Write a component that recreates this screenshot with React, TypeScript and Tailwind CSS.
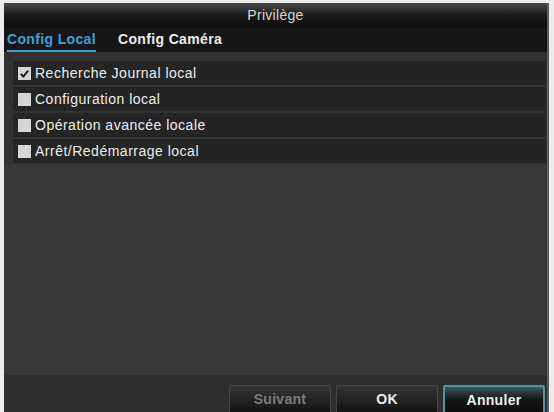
import React from "react";

const rows = [
  { label: "Recherche Journal local", checked: true },
  { label: "Configuration local", checked: false },
  { label: "Opération avancée locale", checked: false },
  { label: "Arrêt/Redémarrage local", checked: false },
];

function CheckBox({ checked }: { checked: boolean }) {
  return (
    <div className="w-[13px] h-[13px] bg-[#d6d6d6] flex items-center justify-center shrink-0">
      {checked && (
        <svg viewBox="0 0 12 12" className="w-[11px] h-[11px]">
          <path d="M2 6.5 L4.8 9.2 L10 2.8" fill="none" stroke="#222" strokeWidth="2.2" />
        </svg>
      )}
    </div>
  );
}

function Button({ label, tone }: { label: string; tone: "disabled" | "normal" | "active" }) {
  const base = "w-[102px] h-[30px] flex items-start justify-center pt-[3px] text-[14px] font-bold rounded-[2px] tracking-[0.3px]";
  if (tone === "active") {
    return (
      <div className={`${base} border-2 border-[#4b97a3] bg-gradient-to-b from-[#3d5a60] via-[#141414] to-[#0c0c0c] text-[#f0f0f0]`}>
        {label}
      </div>
    );
  }
  return (
    <div className={`${base} border border-[#474747] bg-gradient-to-b from-[#353535] to-[#121212] ${tone === "disabled" ? "text-[#7c7c7c]" : "text-[#eeeeee]"}`}>
      {label}
    </div>
  );
}

export default function App() {
  return (
    <div className="w-[554px] h-[412px] bg-[#ececec] pt-[3px] pl-[4px] pr-[5px] overflow-hidden font-['Liberation_Sans',Arial,sans-serif]">
      <div className="h-[420px] flex flex-col bg-[#383838] border-r-2 border-[#5a5a5a]">
        <div className="h-[25px] bg-gradient-to-b from-[#4a4a4a] via-[#1a1a1a] to-[#0d0d0d] flex items-center justify-center text-[14px] text-[#d8d8d8] tracking-[0.3px]">
          Privilège
        </div>
        <div className="h-[24px] bg-[#161616] flex items-end gap-[22px] pl-[3px]">
          <div className="text-[14px] font-bold text-[#3f9fda] border-b-2 border-[#3f9fda] pb-[2px] leading-[17px] tracking-[0.35px]">
            Config Local
          </div>
          <div className="text-[14px] font-bold text-[#ececec] pb-[4px] leading-[17px] tracking-[0.35px]">Config Caméra</div>
        </div>
        <div className="bg-[#323232] pt-[9px] pl-[9px] pr-[1px] pb-[1px] flex flex-col gap-[2px]">
          {rows.map((r) => (
            <div key={r.label} className="h-[24px] bg-[#252525] flex items-center gap-[4px] pl-[5px]">
              <CheckBox checked={r.checked} />
              <span className="text-[14px] text-[#ededed] tracking-[0.5px]">{r.label}</span>
            </div>
          ))}
        </div>
        <div className="h-[211px] bg-[#383838]" />
        <div className="flex-1 bg-[#2e2e2e] flex justify-end gap-[5px] pt-[10px] pr-[2px]">
          <Button label="Suivant" tone="disabled" />
          <Button label="OK" tone="normal" />
          <Button label="Annuler" tone="active" />
        </div>
      </div>
    </div>
  );
}
